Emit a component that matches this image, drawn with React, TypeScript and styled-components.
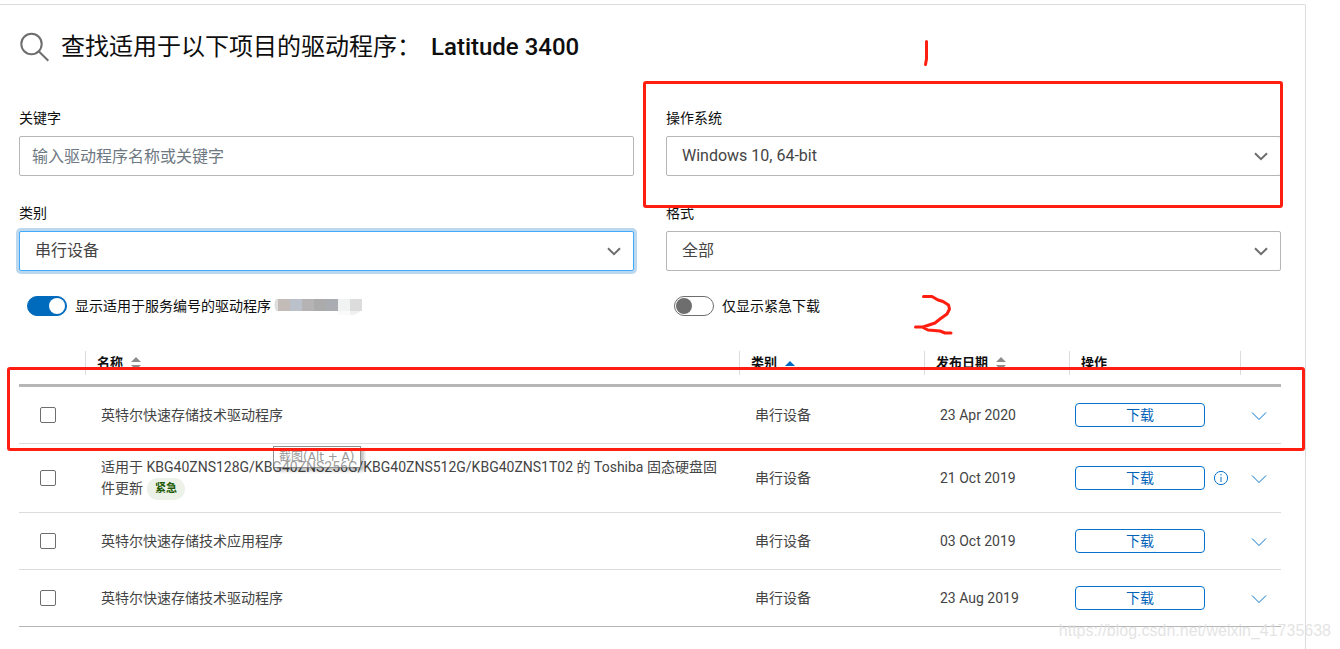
import React from "react";
import styled, { createGlobalStyle, css } from "styled-components";

const GlobalStyle = createGlobalStyle`
  * { box-sizing: border-box; }
  body {
    margin: 0;
    background: #fff;
    color: #0e0e0e;
    font: 14px/20px Roboto, "Noto Sans CJK SC", sans-serif;
    overflow: hidden;
  }
  button, input, select { font-family: inherit; }
`;

const Page = styled.div`
  position: relative;
  padding: 4px 34px 0 0;
`;

const Card = styled.main`
  position: relative;
  border: 1px solid #dcdcdc;
  border-width: 1px 1px 0 0;
  border-radius: 0 2px 0 0;
  padding: 24px 24px 24px 19px;
`;

const Title = styled.h1`
  display: flex;
  align-items: center;
  margin: 0 0 43px;
  height: 36px;
  font-size: 24px;
  line-height: 36px;
  font-weight: 400;

  svg { margin-right: 12px; }
  strong { font-weight: 500; margin-left: 10px; }
`;

const Fields = styled.form`
  display: grid;
  grid-template-columns: 1fr 1fr;
  column-gap: 32px;
  row-gap: 27px;
`;

const Field = styled.div`
  position: relative;
`;

const Label = styled.label`
  display: block;
  height: 20px;
  margin-bottom: 8px;
`;

const control = css`
  width: 100%;
  height: 40px;
  border: 1px solid #b6b6b6;
  border-radius: 2px;
  background: #fff;
  color: #444;
  font-size: 16px;
  outline: none;
`;

const TextInput = styled.input`
  ${control}
  padding: 0 12px;
  &::placeholder { color: #6e7882; opacity: 1; }
`;

const SelectWrap = styled.div`
  display: grid;
  align-items: center;
  > * { grid-area: 1 / 1; }
  svg { justify-self: end; margin-right: 13px; pointer-events: none; }
`;

const Select = styled.select<{ $focused?: boolean }>`
  ${control}
  appearance: none;
  padding: 0 15px 2px;
  ${(p) => p.$focused && css`
    border-color: #42aaff;
    box-shadow: 0 0 0 3px #bbd8ee;
  `}
`;

const ToggleRow = styled.div`
  display: flex;
  align-items: center;
  height: 20px;
  padding-left: 8px;
  gap: 2px;
`;

const ToggleLabel = styled.label`
  display: flex;
  align-items: center;
  gap: 8px;
`;

const Switch = styled.input`
  appearance: none;
  display: flex;
  align-items: center;
  width: 40px;
  height: 20px;
  margin: 0;
  padding: 0 1px;
  border: 1px solid #6e6e6e;
  border-radius: 10px;
  background: #fff;

  &::before {
    content: "";
    width: 16px;
    height: 16px;
    border-radius: 50%;
    background: #6e6e6e;
  }
  &:checked {
    justify-content: flex-end;
    border-color: #006bbd;
    background: #006bbd;
  }
  &:checked::before { background: #fff; }
`;

const Toggles = styled.div`
  display: grid;
  grid-template-columns: 1fr 1fr;
  column-gap: 32px;
  margin: 25px 0 35px;
`;

const TableWrap = styled.div`
  position: relative;
`;

const Table = styled.table`
  width: 100%;
  table-layout: fixed;
  border-collapse: separate;
  border-spacing: 0;
  color: #444;
`;

const Col = styled.col<{ $width?: number }>`
  width: ${(p) => (p.$width ? `${p.$width}px` : "auto")};
`;

const HeadCell = styled.th`
  padding: 0 0 9px;
  border-bottom: 3px solid #b6b6b6;
  text-align: left;
  color: #0e0e0e;
`;

const HeadLabel = styled.div<{ $plain?: boolean }>`
  display: flex;
  align-items: center;
  gap: 8px;
  height: 24px;
  padding-left: 11px;
  border-left: ${(p) => (p.$plain ? "0" : "1px solid #dcdcdc")};
  font-size: 13px;
  line-height: 24px;
  font-weight: 700;
`;

const Row = styled.tr`
  td { border-bottom: 1px solid #dcdcdc; }
  &:last-child td { border-bottom-color: #b6b6b6; }
`;

const Cell = styled.td`
  height: 57px;
  padding: 0 16px;
  vertical-align: middle;
  line-height: 21px;
`;

const NameCell = styled(Cell)<{ $tall?: boolean }>`
  height: ${(p) => (p.$tall ? "69px" : "57px")};
`;

const CheckCell = styled(Cell)`
  padding: 0 0 0 21px;
`;

const Check = styled.input`
  appearance: none;
  display: block;
  width: 16px;
  height: 16px;
  margin: 0;
  border: 1px solid #6e6e6e;
  border-radius: 2px;
  background: #fff;
`;

const Badge = styled.span`
  display: inline-block;
  height: 22px;
  margin-left: 4px;
  padding: 0 8px;
  border-radius: 11px;
  background: #ecf2e7;
  color: #235a06;
  font-size: 11px;
  font-weight: 700;
  line-height: 22px;
  vertical-align: top;
`;

const ActionCell = styled(Cell)`
  padding: 0 6px;
`;

const Actions = styled.div`
  display: flex;
  align-items: center;
  gap: 8px;
`;

const DownloadButton = styled.button`
  width: 130px;
  height: 24px;
  padding: 0;
  border: 1px solid #0672cb;
  border-radius: 4px;
  background: #fff;
  color: #0063b8;
  font-size: 14px;
  line-height: 20px;
`;

const IconButton = styled.button`
  display: block;
  padding: 0;
  border: 0;
  background: none;
  color: #0672cb;
  svg { display: block; }
`;

const ExpandCell = styled(Cell)`
  padding: 2px 0 0 11px;
`;

const Frame = styled.div`
  position: absolute;
  z-index: 2;
  border: 3px solid #ff1e10;
  border-radius: 3px;
  pointer-events: none;
`;

const FieldFrame = styled(Frame)`
  inset: -27px -2px -32px -23px;
`;

const RowFrame = styled(Frame)`
  top: 16px;
  left: -12px;
  right: -24px;
  height: 84px;
`;

const Marks = styled.svg`
  position: absolute;
  top: 35px;
  right: 340px;
  pointer-events: none;
`;

const Tip = styled.div`
  position: absolute;
  top: 95px;
  left: 254px;
  z-index: 1;
  min-width: 85px;
  height: 22px;
  padding: 0 5px;
  border: 1px solid #767676;
  background: rgba(255, 255, 255, 0.6);
  box-shadow: 3px 3px 3px rgba(0, 0, 0, 0.3);
  color: #808080;
  font: 12px/20px "DejaVu Sans", "Noto Sans CJK SC", sans-serif;
  white-space: nowrap;
  opacity: 0.8;
`;

const Watermark = styled.div`
  position: absolute;
  right: 9px;
  bottom: 10px;
  color: rgba(222, 222, 222, 0.85);
  font: 16px/20px "Liberation Sans", sans-serif;
`;

const Search = () => (
  <svg width="30" height="30" viewBox="0 0 30 30" fill="none" stroke="#6e6e6e" strokeWidth="2">
    <circle cx="12.5" cy="12" r="10.2" />
    <path d="M19.7 19.2 29.3 28.8" />
  </svg>
);

const SelectArrow = () => (
  <svg width="14" height="9" viewBox="0 0 14 9" fill="none" stroke="#6e6e6e" strokeWidth="2">
    <path d="M1 1.2 7 7.2 13 1.2" />
  </svg>
);

const Expand = () => (
  <svg width="16" height="10" viewBox="0 0 16 10" fill="none" stroke="currentColor">
    <path d="M1 1.5 8 8.5 15 1.5" />
  </svg>
);

const Info = () => (
  <svg width="16" height="16" viewBox="0 0 16 16" fill="none" stroke="currentColor">
    <circle cx="8" cy="8" r="6.6" />
    <path d="M8 6.8V12M8 4v1.4" />
  </svg>
);

const Sort = () => (
  <svg width="10" height="12" viewBox="0 0 10 12" fill="#8c8c8c">
    <path d="M0 5 5 0 10 5ZM0 8H10L5 13Z" />
  </svg>
);

const SortUp = () => (
  <svg width="10" height="12" viewBox="0 0 10 12" fill="#006bbd">
    <path d="M0 9 5 4 10 9Z" />
  </svg>
);

const Redacted = () => (
  <svg width="90" height="20" viewBox="0 -2 90 20">
    <path d="M5 1H3Q0 6 3 13H5Z" fill="#dedede" />
    <path d="M5 1h12v12H5z" fill="#c2bbb7" />
    <path d="M17 1h12v12H17z" fill="#bbc1ca" />
    <path d="M29 1h12v12H29z" fill="#b6b3b5" />
    <path d="M41 1h12v12H41z" fill="#acabac" />
    <path d="M53 1h12v12H53z" fill="#a9adb1" />
    <path d="M65 1h12v12H65z" fill="#f1f2f2" />
    <path d="M77 1h12v12H77z" fill="#dcdcdc" />
    <path d="M65 13h12v4H65z" fill="#fafafa" />
    <path d="M77 13h10q-3 4-8 4h-2z" fill="#f0f0f0" />
  </svg>
);

interface Driver {
  name: string;
  date: string;
  urgent?: boolean;
}

const drivers: Driver[] = [
  { name: "英特尔快速存储技术驱动程序", date: "23 Apr 2020" },
  {
    name: "适用于 KBG40ZNS128G/KBG40ZNS256G/KBG40ZNS512G/KBG40ZNS1T02 的 Toshiba 固态硬盘固件更新",
    date: "21 Oct 2019",
    urgent: true,
  },
  { name: "英特尔快速存储技术应用程序", date: "03 Oct 2019" },
  { name: "英特尔快速存储技术驱动程序", date: "23 Aug 2019" },
];

interface SelectFieldProps {
  id: string;
  label: string;
  value: string;
  focused?: boolean;
  framed?: boolean;
}

const SelectField = ({ id, label, value, focused, framed }: SelectFieldProps) => (
  <Field>
    <Label htmlFor={id}>{label}</Label>
    <SelectWrap>
      <Select id={id} $focused={focused}>
        <option>{value}</option>
      </Select>
      <SelectArrow />
    </SelectWrap>
    {framed && <FieldFrame />}
  </Field>
);

export default function App() {
  return (
    <Page>
      <GlobalStyle />
      <Card>
        <Title>
          <Search />
          查找适用于以下项目的驱动程序：<strong>Latitude 3400</strong>
        </Title>
        <Fields>
          <Field>
            <Label htmlFor="keyword">关键字</Label>
            <TextInput id="keyword" placeholder="输入驱动程序名称或关键字" />
          </Field>
          <SelectField id="os" label="操作系统" value="Windows 10, 64-bit" framed />
          <SelectField id="category" label="类别" value="串行设备" focused />
          <SelectField id="format" label="格式" value="全部" />
        </Fields>
        <Toggles>
          <ToggleRow>
            <ToggleLabel>
              <Switch type="checkbox" role="switch" defaultChecked />
              显示适用于服务编号的驱动程序
            </ToggleLabel>
            <Redacted />
          </ToggleRow>
          <ToggleRow>
            <ToggleLabel>
              <Switch type="checkbox" role="switch" />
              仅显示紧急下载
            </ToggleLabel>
          </ToggleRow>
        </Toggles>
        <TableWrap>
          <Table>
            <colgroup>
              <Col $width={66} />
              <Col />
              <Col $width={185} />
              <Col $width={145} />
              <Col $width={171} />
              <Col $width={41} />
            </colgroup>
            <thead>
              <tr>
                <HeadCell><HeadLabel $plain /></HeadCell>
                <HeadCell><HeadLabel>名称<Sort /></HeadLabel></HeadCell>
                <HeadCell><HeadLabel>类别<SortUp /></HeadLabel></HeadCell>
                <HeadCell><HeadLabel>发布日期<Sort /></HeadLabel></HeadCell>
                <HeadCell><HeadLabel>操作</HeadLabel></HeadCell>
                <HeadCell><HeadLabel /></HeadCell>
              </tr>
            </thead>
            <tbody>
              {drivers.map((d) => (
                <Row key={d.date}>
                  <CheckCell><Check type="checkbox" aria-label={d.name} /></CheckCell>
                  <NameCell $tall={d.urgent}>
                    {d.name}
                    {d.urgent && <Badge>紧急</Badge>}
                  </NameCell>
                  <Cell>串行设备</Cell>
                  <Cell>{d.date}</Cell>
                  <ActionCell>
                    <Actions>
                      <DownloadButton type="button">下载</DownloadButton>
                      {d.urgent && <IconButton type="button" aria-label="信息"><Info /></IconButton>}
                    </Actions>
                  </ActionCell>
                  <ExpandCell><IconButton type="button" aria-label="展开"><Expand /></IconButton></ExpandCell>
                </Row>
              ))}
            </tbody>
          </Table>
          <RowFrame />
          <Tip>截图(Alt + A)</Tip>
        </TableWrap>
        <Marks width="60" height="310" viewBox="0 5 60 310" fill="none" stroke="#ff1e10" strokeWidth="3" strokeLinecap="round" strokeLinejoin="round">
          <path d="M21.500 6.500V24L20.500 29.500" />
          <path d="M18.500 261.500H27L33 265 38 266.500 43.500 270 44.500 274 42 279 35 284 30 288 24 290 18 292H10.500M17 292 23 295 35 296 40 298H46" />
        </Marks>
      </Card>
      <Watermark>https://blog.csdn.net/weixin_41735638</Watermark>
    </Page>
  );
}
